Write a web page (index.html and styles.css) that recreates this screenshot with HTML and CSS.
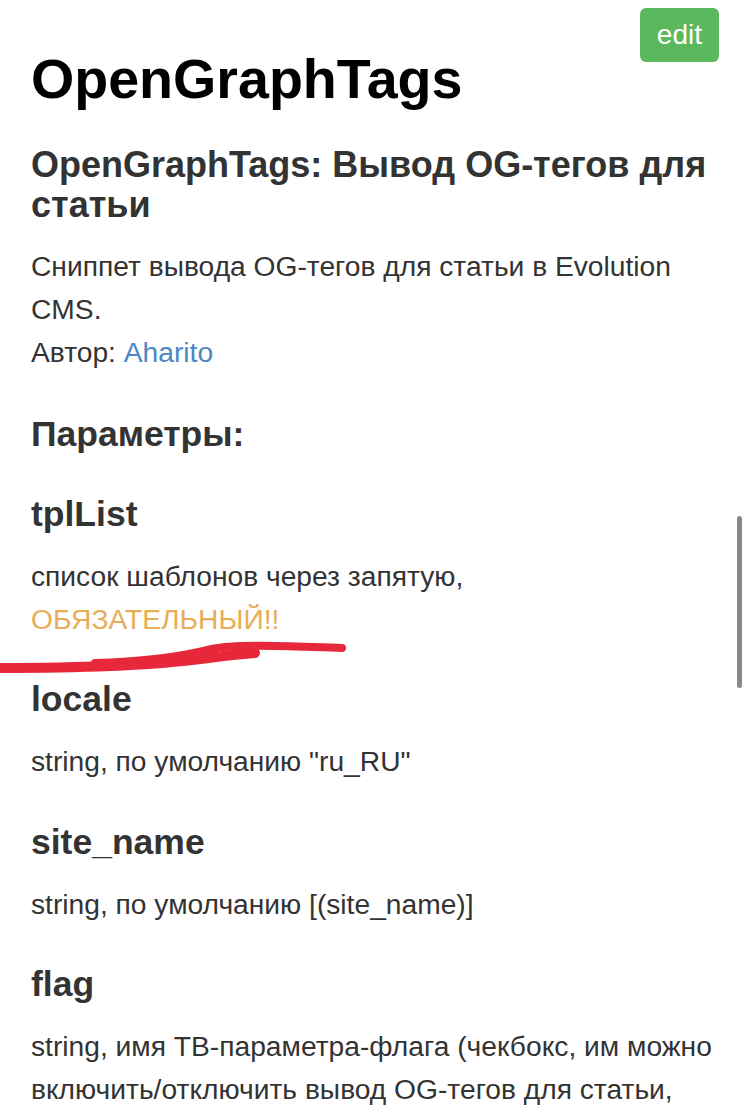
FILE: index.html
```html
<!DOCTYPE html>
<html>
<head>
    <title>OpenGraphTags</title>
    <link rel="stylesheet" href="styles.css">
</head>
<body>
    <div class="page">
        <a class="btn-edit" href="#">edit</a>
        <h1>OpenGraphTags</h1>
        <h2>OpenGraphTags: Вывод OG-тегов для статьи</h2>
        <p class="lead">Сниппет вывода OG-тегов для статьи в Evolution CMS.<br>
            Автор: <a href="#">Aharito</a></p>

        <h3>Параметры:</h3>

        <h4>tplList</h4>
        <p>список шаблонов через запятую, <span class="warn">ОБЯЗАТЕЛЬНЫЙ!!</span></p>

        <h4>locale</h4>
        <p>string, по умолчанию "ru_RU"</p>

        <h4>site_name</h4>
        <p>string, по умолчанию [(site_name)]</p>

        <h4>flag</h4>
        <p>string, имя ТВ-параметра-флага (чекбокс, им можно включить/отключить вывод OG-тегов для статьи, например, если статья не предназначена для публикации в соцсетях)</p>
    </div>

    <!-- hand-drawn marker over the screenshot -->
    <svg class="marker" width="360" height="50" viewBox="0 0 360 50">
        <path d="M-5 38 C 80 38, 150 35, 192 30 S 228 25, 255 23" fill="none" stroke="#e6283a" stroke-width="10" stroke-linecap="round"/>
        <path d="M95 33 C 150 32, 188 25, 212 19 C 240 13, 300 17, 342 18" fill="none" stroke="#e6283a" stroke-width="8" stroke-linecap="round"/>
    </svg>
    <div class="scrollbar"></div>
</body>
</html>
```
FILE: styles.css
```css
body { margin: 0; font-family: "Liberation Sans", Arial, sans-serif; color: #333; background: #fff; }
.page { padding: 8px 33px 0 31px; }
a { color: #4a87c3; text-decoration: none; }

.btn-edit { float: right; background: #5cb85c; color: #fff; font-size: 28px; line-height: 54px; padding: 0 17px; border-radius: 6px; margin-right: -3px; }

h1 { margin: 39px 0 0; font-size: 55.6px; line-height: 64px; color: #000; font-weight: bold; }
h2 { margin: 34px 0 0; font-size: 36px; line-height: 40px; font-weight: bold; }
h3 { margin: 39px 0 0; font-size: 35.5px; line-height: 42px; font-weight: bold; }
h4 { margin: 37.5px 0 0; font-size: 35.5px; line-height: 42px; font-weight: bold; }
p { margin: 18px 0 0; font-size: 28.2px; line-height: 43px; }
p.lead { margin-top: 20px; }
h4 + p { margin-top: 20px; }
.warn { color: #e8ad57; }

.marker { position: absolute; left: 0; top: 630px; }
.scrollbar { position: absolute; left: 737px; top: 516px; width: 5px; height: 172px; background: #888; border-radius: 3px; }
```
